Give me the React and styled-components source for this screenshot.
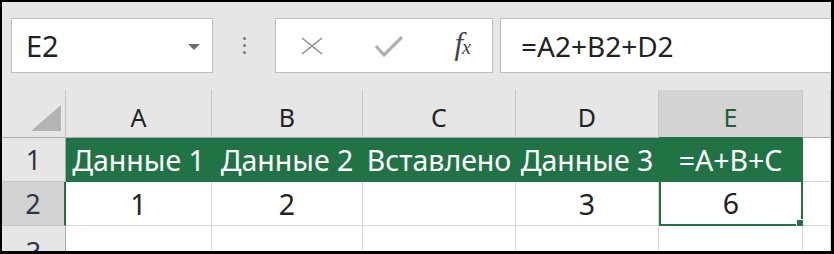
import React from 'react';
import styled, { createGlobalStyle } from 'styled-components';

const GlobalStyle = createGlobalStyle`
    body {
        margin: 0;
        background: #000;
    }
`

const Frame = styled.div`
    width: 834px;
    height: 254px;
    box-sizing: border-box;
    border: 2px solid #000;
    border-right-width: 3px;
    border-bottom-width: 3px;
    background: #e6e6e6;
    overflow: hidden;
    font-family: "Noto Sans", "Open Sans", sans-serif;
    color: #222;
`

const Toolbar = styled.div`
    height: 88px;
    box-sizing: border-box;
    padding: 16px 0 0 9px;
    display: flex;
    align-items: flex-start;
`

const Box = styled.div`
    height: 55px;
    box-sizing: border-box;
    background: #fff;
    border: 1px solid #bdbdbd;
    display: flex;
    align-items: center;
`

const NameBox = styled(Box)`
    width: 202px;
    padding: 0 12px 0 14px;
    justify-content: space-between;
    font-size: 29px;
`

const DropArrow = styled.span`
    width: 0;
    height: 0;
    border-left: 6px solid transparent;
    border-right: 6px solid transparent;
    border-top: 6px solid #6d6d6d;
    margin-top: 2px;
`

const Grip = styled.div`
    width: 62px;
    height: 55px;
    display: flex;
    flex-direction: column;
    align-items: center;
    justify-content: center;
    gap: 4px;
`

const Dot = styled.span`
    width: 3px;
    height: 3px;
    border-radius: 50%;
    background: #777;
`

const FuncBox = styled(Box)`
    width: 218px;
    padding: 0 22px 0 24px;
    justify-content: space-between;
    margin-right: 7px;
`

const Fx = styled.span`
    font-family: "Liberation Serif", serif;
    font-style: italic;
    font-size: 31px;
    color: #444;
    letter-spacing: -1px;
    margin-top: -4px;

    small {
        font-size: 20px;
    }
`

const FormulaBox = styled(Box)`
    flex: 1;
    border-right: none;
    padding-left: 20px;
    font-size: 28px;
`

const Sheet = styled.div`
    display: grid;
    grid-template-columns: 64px 146px 151px 153px 143px 144px 1fr;
    grid-template-rows: 48px 44px 44px 30px;
    background: #fff;
`

const ColHead = styled.div`
    background: ${p => (p.$active ? '#d3d3d3' : '#e6e6e6')};
    border-right: 1px solid #c6c6c6;
    border-bottom: 1px solid ${p => (p.$active ? '#217346' : '#ababab')};
    display: flex;
    align-items: center;
    justify-content: center;
    font-size: 25px;
    padding-top: 6px;
    box-sizing: border-box;
    color: ${p => (p.$active ? '#1e5e3a' : '#222')};
`

const Corner = styled(ColHead)`
    justify-content: flex-end;
    padding: 14px 4px 6px 0;
    align-items: flex-end;
`

const RowHead = styled.div`
    background: ${p => (p.$active ? '#d3d3d3' : '#e6e6e6')};
    border-right: ${p => (p.$active ? '2px solid #217346' : '1px solid #ababab')};
    border-bottom: 1px solid #c6c6c6;
    display: flex;
    justify-content: center;
    align-items: ${p => (p.$clip ? 'flex-start' : 'center')};
    padding-top: ${p => (p.$clip ? '7px' : '0')};
    font-size: 27px;
    color: #2f3350;
    box-sizing: border-box;
    overflow: hidden;
`

const Cell = styled.div`
    position: relative;
    border-right: 1px solid ${p => (p.$green ? '#217346' : '#d6d6d6')};
    border-bottom: 1px solid ${p => (p.$green ? '#217346' : '#d6d6d6')};
    background: ${p => (p.$green ? '#217346' : '#fff')};
    color: ${p => (p.$green ? '#fff' : '#222')};
    display: flex;
    align-items: center;
    justify-content: center;
    font-size: 28.5px;
    white-space: nowrap;
    box-sizing: border-box;
    ${p => p.$selected && `
        border: 2px solid #217346;
        border-top: none;
    `}
`

const FillHandle = styled.span`
    position: absolute;
    right: -5px;
    bottom: -5px;
    width: 8px;
    height: 8px;
    background: #217346;
    border: 1px solid #fff;
`

const CrossIcon = () => (
    <svg width="24" height="18" viewBox="0 0 24 18">
        <path d="M2 1 L22 17 M22 1 L2 17" stroke="#8d8d8d" strokeWidth="1.6" fill="none" />
    </svg>
)

const CheckIcon = () => (
    <svg width="30" height="22" viewBox="0 0 30 22">
        <path d="M2 11 L10 20 L28 2" stroke="#b0b0b0" strokeWidth="3.2" fill="none" />
    </svg>
)

const columns = ['A', 'B', 'C', 'D', 'E']
const headers = ['Данные 1', 'Данные 2', 'Вставлено', 'Данные 3', '=A+B+C']
const values = ['1', '2', '', '3', '6']

const App = () => {
    return (
        <>
            <GlobalStyle />
            <Frame>
                <Toolbar>
                    <NameBox>
                        <span>E2</span>
                        <DropArrow />
                    </NameBox>
                    <Grip>
                        <Dot /><Dot /><Dot />
                    </Grip>
                    <FuncBox>
                        <CrossIcon />
                        <CheckIcon />
                        <Fx>f<small>x</small></Fx>
                    </FuncBox>
                    <FormulaBox>=A2+B2+D2</FormulaBox>
                </Toolbar>
                <Sheet>
                    <Corner>
                        <svg width="30" height="26" viewBox="0 0 30 26">
                            <path d="M30 0 L30 26 L0 26 Z" fill="#b4b4b4" />
                        </svg>
                    </Corner>
                    {columns.map(c => (
                        <ColHead key={c} $active={c === 'E'}>{c}</ColHead>
                    ))}
                    <ColHead />

                    <RowHead>1</RowHead>
                    {headers.map(h => (
                        <Cell key={h} $green>{h}</Cell>
                    ))}
                    <Cell />

                    <RowHead $active>2</RowHead>
                    {values.map((v, i) => (
                        <Cell key={i} $selected={i === 4}>
                            {v}
                            {i === 4 && <FillHandle />}
                        </Cell>
                    ))}
                    <Cell />

                    <RowHead $clip>3</RowHead>
                    {values.map((v, i) => <Cell key={i} />)}
                    <Cell />
                </Sheet>
            </Frame>
        </>
    );
}

export default App;
